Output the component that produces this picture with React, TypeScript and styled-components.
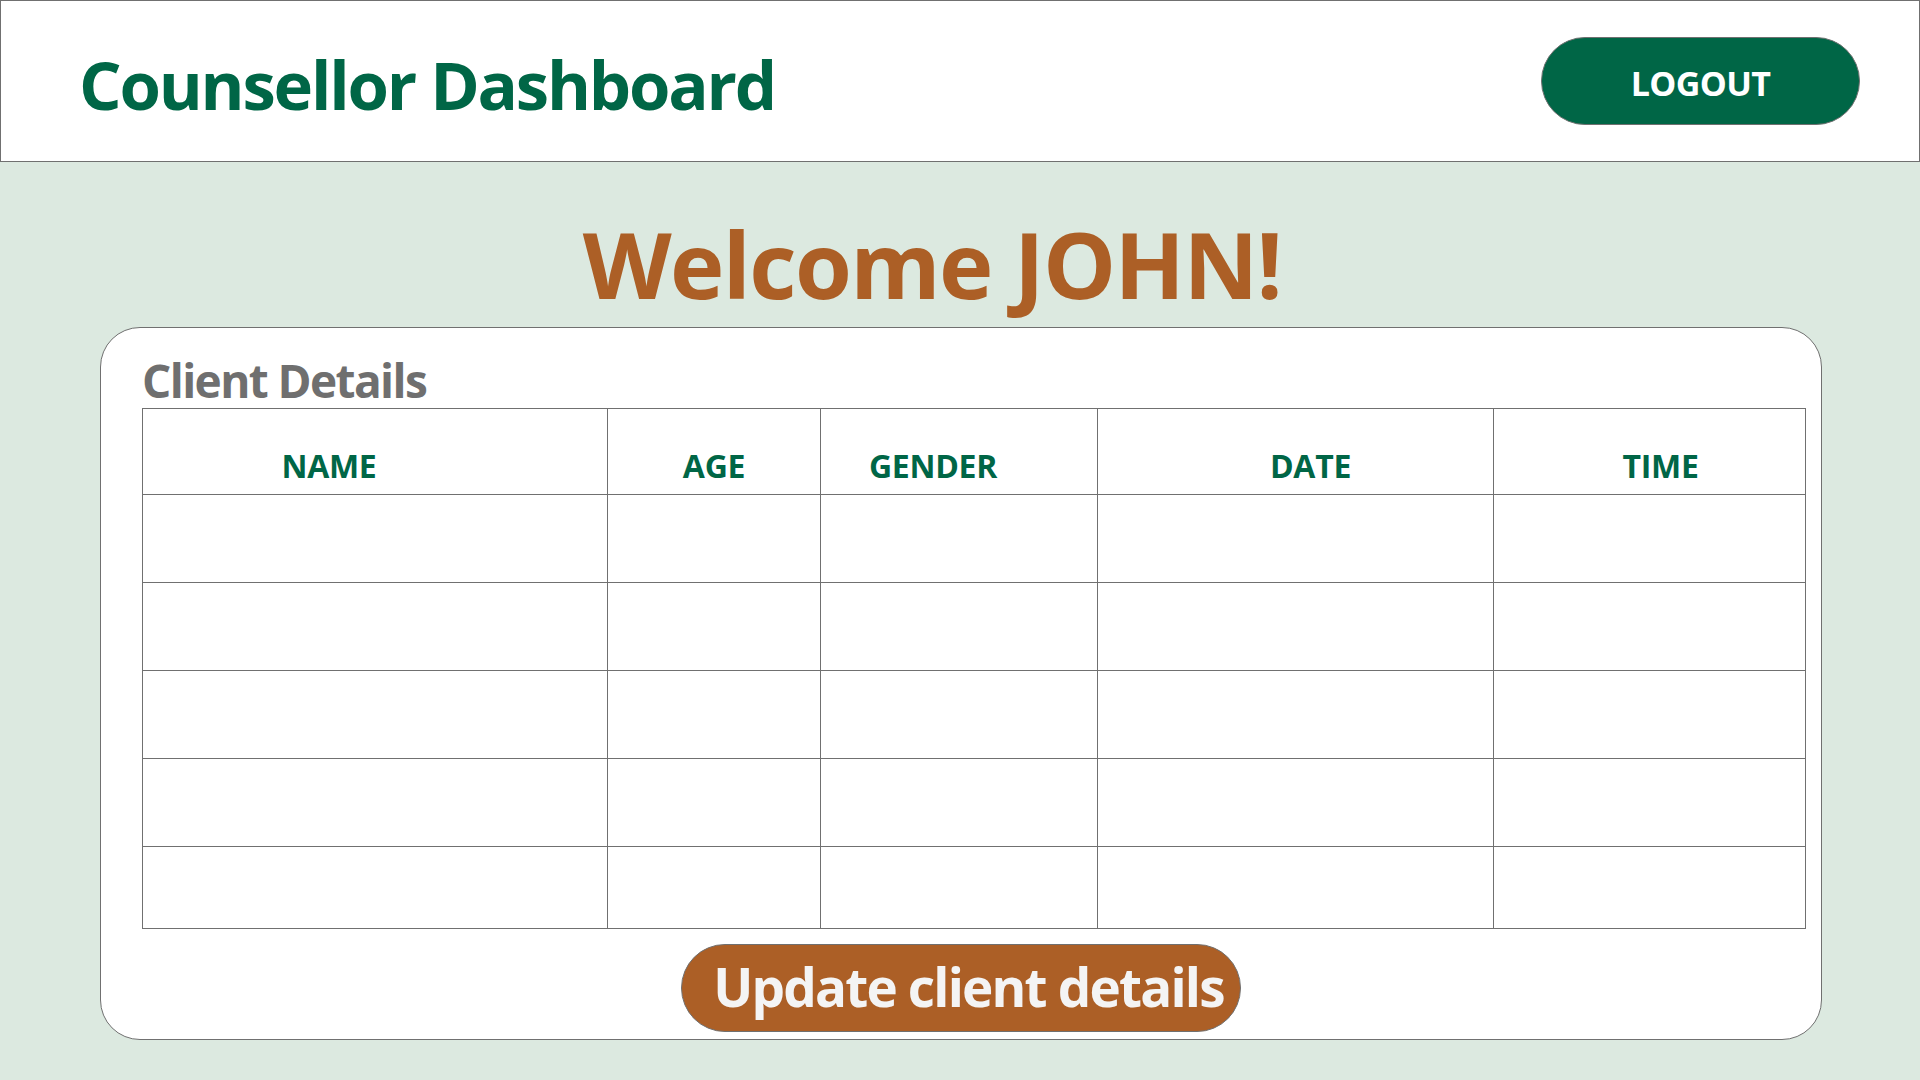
import React from "react";
import styled, { createGlobalStyle } from "styled-components";

const GlobalStyle = createGlobalStyle`
  html, body {
    margin: 0;
    padding: 0;
    background: #dce9e0;
    font-family: "Open Sans", "Noto Sans", "Liberation Sans", sans-serif;
  }
  * { box-sizing: border-box; }
`;

const Page = styled.div`
  width: 1920px;
  height: 1080px;
  background: #dce9e0;
  display: flex;
  flex-direction: column;
  overflow: hidden;
`;

const Header = styled.header`
  height: 162px;
  background: #ffffff;
  border: 1px solid #707070;
  display: flex;
  align-items: center;
  justify-content: space-between;
  padding: 0 59px 0 78px;
`;

const Title = styled.h1`
  margin: 6px 0 0 0;
  font-size: 67px;
  font-weight: 700;
  color: #006646;
  line-height: 1;
  letter-spacing: -2.2px;
  white-space: nowrap;
`;

const LogoutButton = styled.button`
  width: 319px;
  height: 88px;
  border-radius: 44px;
  border: 1px solid #707070;
  background: #006646;
  color: #ffffff;
  font-family: inherit;
  font-size: 34px;
  font-weight: 700;
  letter-spacing: -0.6px;
  display: flex;
  align-items: center;
  justify-content: center;
  padding: 4px 0 0 0;
`;

const Welcome = styled.h2`
  margin: 0;
  height: 165px;
  display: flex;
  align-items: center;
  justify-content: center;
  font-size: 92px;
  font-weight: 700;
  color: #ac5f26;
  line-height: 1;
  letter-spacing: -1.6px;
  padding: 38px 56px 0 0;
  white-space: nowrap;
`;

const Card = styled.section`
  margin: 0 98px 0 100px;
  height: 713px;
  background: #ffffff;
  border: 1px solid #707070;
  border-radius: 40px;
  padding: 0 16px 0 41px;
  display: flex;
  flex-direction: column;
`;

const CardTitle = styled.h3`
  margin: 0;
  height: 80px;
  display: flex;
  align-items: flex-end;
  font-size: 46px;
  font-weight: 700;
  color: #6f6f6f;
  line-height: 1;
  letter-spacing: -1.6px;
  padding-bottom: 5px;
  white-space: nowrap;
`;

const Table = styled.table`
  width: 1663px;
  border-collapse: collapse;
  table-layout: fixed;
  border: 1px solid #707070;
`;

const HeadCell = styled.th<{ $shift: number }>`
  height: 86px;
  border: 1px solid #707070;
  color: #006646;
  font-size: 32px;
  font-weight: 700;
  letter-spacing: -0.3px;
  vertical-align: bottom;
  padding: 0 ${(p) => (p.$shift < 0 ? -p.$shift * 2 : 0)}px 7px
    ${(p) => (p.$shift > 0 ? p.$shift * 2 : 0)}px;
  text-align: center;
`;

const Cell = styled.td<{ $h: number }>`
  height: ${(p) => p.$h}px;
  border: 1px solid #707070;
`;

const Footer = styled.div`
  flex: 1;
  display: flex;
  justify-content: center;
  align-items: flex-start;
  padding-top: 15px;
`;

const UpdateButton = styled.button`
  width: 560px;
  height: 88px;
  margin-right: 26px;
  border-radius: 44px;
  border: 1px solid #707070;
  background: #ac5f26;
  color: #f4f4f4;
  font-family: inherit;
  font-size: 53px;
  font-weight: 700;
  letter-spacing: -1.8px;
  white-space: nowrap;
  display: flex;
  align-items: center;
  justify-content: center;
  padding: 0 0 4px 16px;
`;

const columns = [
  { label: "NAME", width: 465, shift: -46 },
  { label: "AGE", width: 213, shift: 0 },
  { label: "GENDER", width: 277, shift: -26 },
  { label: "DATE", width: 396, shift: 15 },
  { label: "TIME", width: 312, shift: 11 },
];

const rowHeights = [88, 88, 88, 88, 82];

export default function App() {
  return (
    <Page>
      <GlobalStyle />
      <Header>
        <Title>Counsellor Dashboard</Title>
        <LogoutButton>LOGOUT</LogoutButton>
      </Header>
      <Welcome>Welcome JOHN!</Welcome>
      <Card>
        <CardTitle>Client Details</CardTitle>
        <Table>
          <colgroup>
            {columns.map((c) => (
              <col key={c.label} style={{ width: c.width }} />
            ))}
          </colgroup>
          <thead>
            <tr>
              {columns.map((c) => (
                <HeadCell key={c.label} $shift={c.shift}>
                  {c.label}
                </HeadCell>
              ))}
            </tr>
          </thead>
          <tbody>
            {rowHeights.map((h, i) => (
              <tr key={i}>
                {columns.map((c) => (
                  <Cell key={c.label} $h={h} />
                ))}
              </tr>
            ))}
          </tbody>
        </Table>
        <Footer>
          <UpdateButton>Update client details</UpdateButton>
        </Footer>
      </Card>
    </Page>
  );
}
